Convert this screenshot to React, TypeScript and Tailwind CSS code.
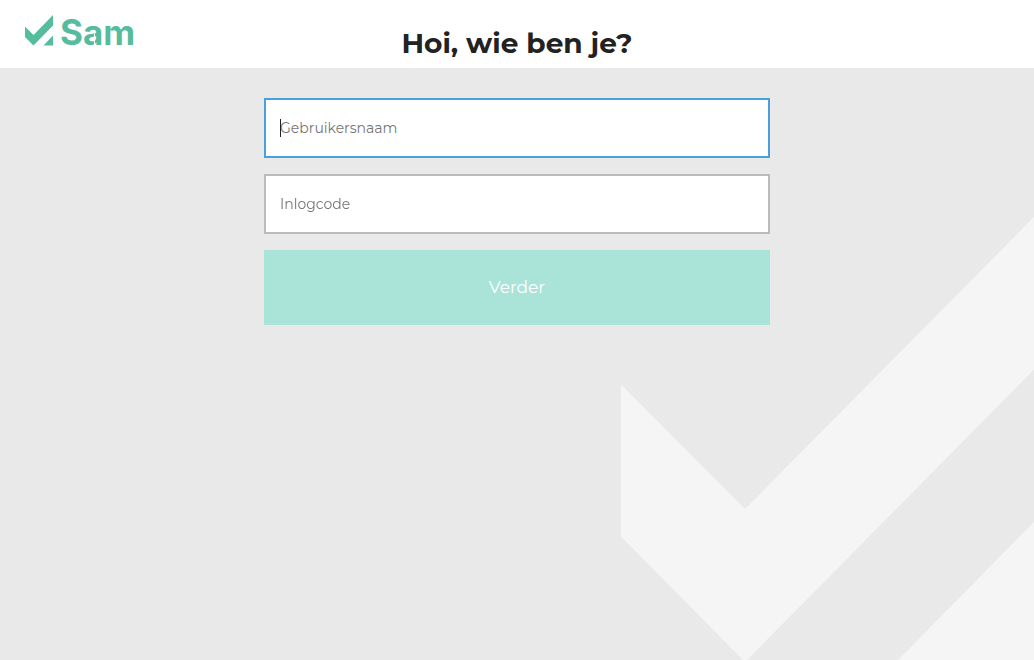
import React from "react";

function Logo() {
  return (
    <a href="#" aria-label="Sam" className="block text-[#55bd9e]">
      <svg className="h-[54px] w-[120px]" viewBox="0 -10 120 54" fill="currentColor" aria-hidden="true">
        <path d="M0 11.5 8.5 20 28 0V10.5L8.5 30.5 0 22Z" />
        <path d="M28 20.5V30.5H18.5Z" />
        <text x="35" y="30" fontSize="35" fontWeight="700" className="font-[Inter,sans-serif]">
          Sam
        </text>
        <path d="M69.500 19V31M86 15V31" stroke="#ffffff" strokeWidth="1" fill="none" />
      </svg>
    </a>
  );
}

function Watermark() {
  return (
    <svg
      className="pointer-events-none absolute right-0 bottom-0 h-[444px] w-[413px]"
      viewBox="0 0 413 444"
      fill="#f5f5f5"
      aria-hidden="true"
    >
      <path d="M0 168.5 124 293 413 1V153.500L124 446 0 320.500Z" />
      <path d="M413 306V444H277Z" />
    </svg>
  );
}

const field =
  "peer block h-[60px] w-full border-2 border-[#bbbbbb] bg-white px-3.5 text-sm text-[#222222] outline-none placeholder:text-[#757575] placeholder:opacity-100 placeholder-shown:caret-transparent focus:border-[#4b9fdb]";

function Field({ id, label, type, focused }: { id: string; label: string; type: string; focused?: boolean }) {
  return (
    <div className="relative">
      <input id={id} type={type} aria-label={label} placeholder={label} autoFocus={focused} className={field} />
      <span className="pointer-events-none absolute top-[21px] left-4 hidden h-[18px] w-px bg-[#222222] peer-placeholder-shown:peer-focus:block" />
    </div>
  );
}

export default function App() {
  return (
    <div className="flex min-h-screen flex-col bg-[#e9e9e9] font-['Montserrat','Inter',sans-serif]">
      <header className="grid h-[68px] grid-cols-[1fr_auto_1fr] bg-white px-[25px]">
        <div className="flex items-start pt-[5px]">
          <Logo />
        </div>
        <h1 className="self-end pb-[7px] text-[28px] leading-9 font-bold text-[#222222]">Hoi, wie ben je?</h1>
      </header>
      <main className="relative flex grow justify-center overflow-hidden px-4 pt-[30px]">
        <Watermark />
        <form className="relative flex w-full max-w-[506px] flex-col gap-4" onSubmit={(e) => e.preventDefault()}>
          <Field id="username" label="Gebruikersnaam" type="text" focused />
          <Field id="code" label="Inlogcode" type="password" />
          <button type="submit" className="h-[75px] w-full bg-[#aae4d9] text-[17px] text-white">
            Verder
          </button>
        </form>
      </main>
    </div>
  );
}
